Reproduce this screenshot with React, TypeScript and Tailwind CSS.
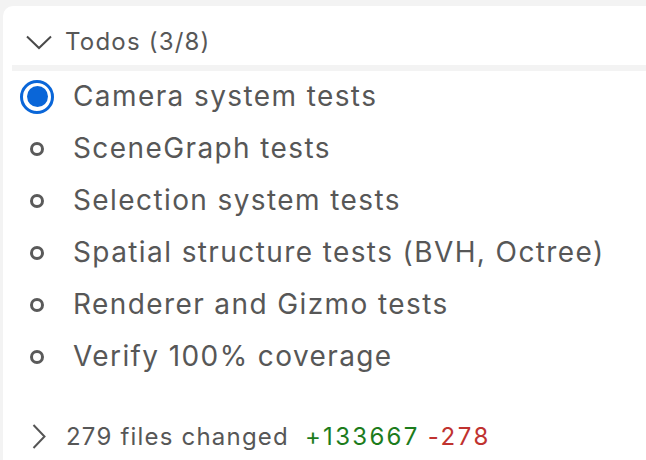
const todos = [
  { label: 'Camera system tests', active: true },
  { label: 'SceneGraph tests', active: false },
  { label: 'Selection system tests', active: false },
  { label: 'Spatial structure tests (BVH, Octree)', active: false },
  { label: 'Renderer and Gizmo tests', active: false },
  { label: 'Verify 100% coverage', active: false },
];

function StatusIcon({ active }: { active: boolean }) {
  if (active) {
    return (
      <div className="w-[34px] h-[34px] rounded-full border-[3px] border-[#0a66d8] flex items-center justify-center">
        <div className="w-[21px] h-[21px] rounded-full bg-[#0a66d8]" />
      </div>
    );
  }
  return <div className="w-[14px] h-[14px] rounded-full border-[3px] border-[#5a5a5a]" />;
}

export default function App() {
  return (
    <div
      className="w-[646px] h-[460px] bg-[#f3f3f3] pl-[3px] pt-[6px] overflow-hidden"
      style={{ fontFamily: 'Inter, "Liberation Sans", sans-serif' }}
    >
      <div className="bg-white rounded-tl-[10px] h-full flex flex-col">
        {/* header */}
        <div className="h-[64px] flex items-center pt-[14px] pl-[23px] text-[24px] tracking-[1.2px] text-[#575757]">
          <svg width="26" height="15" viewBox="0 0 26 15" fill="none" className="shrink-0">
            <polyline points="1,1.5 13,13 25,1.5" stroke="#4a4a4a" strokeWidth="2" />
          </svg>
          <span className="ml-[13px]">Todos (3/8)</span>
        </div>
        <div className="ml-[9px] h-[7px] bg-[#f3f3f3]" />

        {/* todo list */}
        <div className="flex flex-col">
          {todos.map((t) => (
            <div key={t.label} className="h-[52px] flex items-center text-[28px] tracking-[1.4px] text-[#575757]">
              <div className="w-[68px] flex justify-center shrink-0">
                <StatusIcon active={t.active} />
              </div>
              <span className="pl-[2px] -mt-[1px] whitespace-nowrap">{t.label}</span>
            </div>
          ))}
        </div>

        {/* footer */}
        <div className="mt-[31px] h-[52px] flex items-center pl-[29px] text-[24px] tracking-[1.2px] text-[#575757]">
          <svg width="14" height="25" viewBox="0 0 14 25" fill="none" className="shrink-0">
            <polyline points="1.5,1 12.5,12.5 1.5,24" stroke="#555" strokeWidth="2" />
          </svg>
          <span className="ml-[20px] whitespace-nowrap">279 files changed</span>
          <span className="ml-[16px] tracking-[2.3px] text-[#1c7c1c]">+133667</span>
          <span className="ml-[8px] tracking-[2.6px] text-[#c0322f]">-278</span>
        </div>
      </div>
    </div>
  );
}
